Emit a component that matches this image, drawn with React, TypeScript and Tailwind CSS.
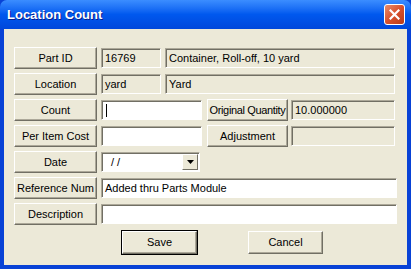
import React from "react";

const font = { fontFamily: '"Liberation Sans", Arial, sans-serif' };

function Btn({
  label,
  w = "w-[83px]",
  h = "h-[22px]",
  def = false,
  tight = false,
}: {
  label: string;
  w?: string;
  h?: string;
  def?: boolean;
  tight?: boolean;
}) {
  return (
    <div
      className={`${w} ${h} shrink-0 flex items-center justify-center whitespace-nowrap text-[11px] text-black bg-[#ECE9D8] border border-t-white border-l-white border-b-[#716F64] border-r-[#716F64] shadow-[inset_-1px_-1px_0_#ACA899] ${
        def ? "outline outline-1 outline-black" : ""
      } ${tight ? "tracking-[-0.35px]" : ""}`}
    >
      {label}
    </div>
  );
}

function Field({
  w,
  value = "",
  white = false,
  caret = false,
}: {
  w: string;
  value?: string;
  white?: boolean;
  caret?: boolean;
}) {
  return (
    <div
      className={`${w} h-[20px] shrink-0 flex items-center pl-[3px] whitespace-nowrap text-[11px] text-black border border-t-[#ACA899] border-l-[#ACA899] border-b-white border-r-white shadow-[inset_1px_1px_0_#716F64] ${
        white ? "bg-white" : "bg-[#ECE9D8]"
      }`}
    >
      {caret && <div className="w-px h-[13px] bg-black ml-[1px]" />}
      {value}
    </div>
  );
}

export default function App() {
  return (
    <div style={font} className="w-[411px] h-[269px] flex flex-col bg-[#0842D6]">
      {/* Title bar */}
      <div className="h-[29px] shrink-0 rounded-t-[7px] bg-gradient-to-b from-[#3B8DFF] via-[#0058EE] to-[#0047DB] flex items-center justify-between pl-[7px] pr-[6px]">
        <span className="text-white font-bold text-[13px] [text-shadow:1px_1px_0_#0A1E8C]">
          Location Count
        </span>
        <div className="w-[21px] h-[21px] rounded-[3px] border border-white bg-gradient-to-br from-[#E88C6A] via-[#D8502C] to-[#B73A18] flex items-center justify-center">
          <svg width="11" height="11" viewBox="0 0 11 11">
            <path d="M1.5 1.5 L9.5 9.5 M9.5 1.5 L1.5 9.5" stroke="white" strokeWidth="2.2" strokeLinecap="square" />
          </svg>
        </div>
      </div>

      {/* Body */}
      <div className="flex-1 mx-[4px] mb-[4px] bg-[#ECE9D8] flex flex-col pl-[10px] pt-[18px] gap-[4px]">
        <div className="flex items-center gap-[4px]">
          <Btn label="Part ID" />
          <Field w="w-[60px]" value="16769" />
          <Field w="w-[230px]" value="Container, Roll-off, 10 yard" />
        </div>
        <div className="flex items-center gap-[4px]">
          <Btn label="Location" />
          <Field w="w-[60px]" value="yard" />
          <Field w="w-[230px]" value="Yard" />
        </div>
        <div className="flex items-center">
          <Btn label="Count" />
          <div className="ml-[4px]">
            <Field w="w-[101px]" white caret />
          </div>
          <div className="ml-[5px]">
            <Btn label="Original Quantity" w="w-[81px]" tight />
          </div>
          <div className="ml-[3px]">
            <Field w="w-[104px]" value="10.000000" />
          </div>
        </div>
        <div className="flex items-center">
          <Btn label="Per Item Cost" />
          <div className="ml-[4px]">
            <Field w="w-[101px]" white />
          </div>
          <div className="ml-[5px]">
            <Btn label="Adjustment" w="w-[81px]" />
          </div>
          <div className="ml-[3px]">
            <Field w="w-[104px]" />
          </div>
        </div>
        <div className="flex items-center gap-[4px]">
          <Btn label="Date" />
          <div className="w-[99px] h-[20px] flex items-center bg-white border border-t-[#ACA899] border-l-[#ACA899] border-b-white border-r-white shadow-[inset_1px_1px_0_#716F64]">
            <span className="flex-1 pl-[9px] text-[11px] whitespace-pre">/ /</span>
            <div className="w-[16px] h-[16px] mr-[1px] bg-[#ECE9D8] border border-t-white border-l-white border-b-[#716F64] border-r-[#716F64] flex items-center justify-center">
              <svg width="7" height="4" viewBox="0 0 7 4">
                <path d="M0 0 H7 L3.5 4 Z" fill="black" />
              </svg>
            </div>
          </div>
        </div>
        <div className="flex items-center gap-[4px]">
          <Btn label="Reference Num" />
          <Field w="w-[296px]" value="Added thru Parts Module" white />
        </div>
        <div className="flex items-center gap-[4px]">
          <Btn label="Description" />
          <Field w="w-[296px]" white />
        </div>
        <div className="flex items-center pl-[108px] pt-[2px] gap-[51px]">
          <Btn label="Save" w="w-[75px]" h="h-[23px]" def />
          <Btn label="Cancel" w="w-[75px]" h="h-[23px]" />
        </div>
      </div>
    </div>
  );
}
